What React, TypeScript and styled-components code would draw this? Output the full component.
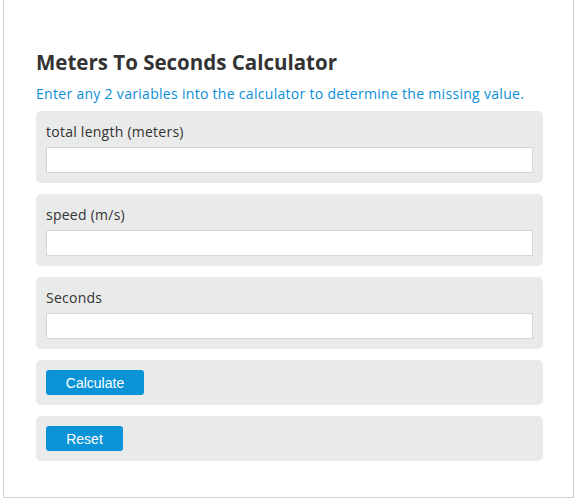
import React from 'react';
import styled, {createGlobalStyle} from 'styled-components';

const GlobalStyle = createGlobalStyle`
    html, body {
        margin: 0;
        padding: 0;
        background: #ffffff;
    }
`;

const Page = styled.div`
    padding: 0 4px 0 3px;
    width: 578px;
    box-sizing: border-box;
`;

const Panel = styled.div`
    border: 1px solid #cfcfd4;
    border-top: none;
    padding: 41px 30px 36px 32px;
    font-family: 'Open Sans', 'DejaVu Sans', sans-serif;
`;

const Title = styled.h1`
    margin: 0;
    font-size: 20.5px;
    font-weight: 700;
    line-height: 42px;
    color: #333333;
`;

const Intro = styled.p`
    margin: 0 0 6px 0;
    font-size: 14px;
    line-height: 22px;
    letter-spacing: 0.3px;
    color: #0a8ed8;
`;

const Stack = styled.div`
    display: flex;
    flex-direction: column;
    gap: 11px;
`;

const Card = styled.div`
    background: #e9eaea;
    border-radius: 5px;
    padding: 10px;
    display: flex;
    flex-direction: column;
    align-items: flex-start;
`;

const Label = styled.label`
    font-size: 14px;
    line-height: 22px;
    letter-spacing: 0.25px;
    color: #333333;
    margin-bottom: 4px;
`;

const Field = styled.input`
    width: 100%;
    height: 26px;
    box-sizing: border-box;
    border: 1px solid #d6d6d6;
    background: #ffffff;
    outline: none;
`;

const Button = styled.button<{ $width: number }>`
    width: ${p => p.$width}px;
    height: 25px;
    border: none;
    border-radius: 3px;
    background: #0b93d8;
    color: #ffffff;
    font-family: 'Liberation Sans', Arial, sans-serif;
    font-size: 14px;
    padding: 0;
    cursor: pointer;
`;

const fields = ['total length (meters)', 'speed (m/s)', 'Seconds'];

export const App = () => {
    return (
        <Page>
            <GlobalStyle />
            <Panel>
                <Title>Meters To Seconds Calculator</Title>
                <Intro>Enter any 2 variables into the calculator to determine the missing value.</Intro>
                <Stack>
                    {fields.map(f => (
                        <Card key={f}>
                            <Label>{f}</Label>
                            <Field type="text" />
                        </Card>
                    ))}
                    <Card>
                        <Button $width={98}>Calculate</Button>
                    </Card>
                    <Card>
                        <Button $width={77}>Reset</Button>
                    </Card>
                </Stack>
            </Panel>
        </Page>
    );
};

export default App;
